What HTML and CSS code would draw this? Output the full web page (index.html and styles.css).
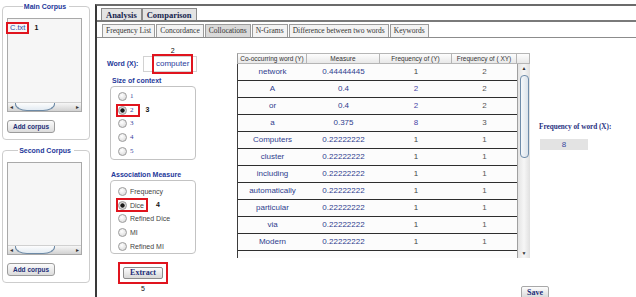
FILE: index.html
```html
<!DOCTYPE html>
<html>
<head>
<meta charset="utf-8">
<link rel="stylesheet" href="styles.css">
</head>
<body>
<div class="app">
  <aside class="side">
    <section class="corpus">
      <div class="legend">Main Corpus</div>
      <div class="list">
        <div class="list-items">
          <div class="list-item"><span class="mark mark-file">C.txt</span><span class="anno num1">1</span></div>
        </div>
        <div class="hscroll"><span class="arr">&#9666;</span><span class="thumb"></span><span class="track"></span><span class="arr">&#9656;</span></div>
      </div>
      <button class="btn btn-add">Add corpus</button>
    </section>
    <section class="corpus corpus-second">
      <div class="legend">Second Corpus</div>
      <div class="list">
        <div class="list-items"></div>
        <div class="hscroll"><span class="arr">&#9666;</span><span class="thumb"></span><span class="track"></span><span class="arr">&#9656;</span></div>
      </div>
      <button class="btn btn-add">Add corpus</button>
    </section>
  </aside>

  <main class="main">
    <nav class="tabs1">
      <span class="tab1 active">Analysis</span><span class="tab1">Comparison</span>
    </nav>
    <nav class="tabs2">
      <span class="tab2">Frequency List</span>
      <span class="tab2">Concordance</span>
      <span class="tab2 active">Collocations</span>
      <span class="tab2">N-Grams</span>
      <span class="tab2">Difference between two words</span>
      <span class="tab2">Keywords</span>
    </nav>

    <div class="content">
      <div class="controls">
        <div class="word-row">
          <span class="lbl word-lbl">Word (X):</span>
          <div class="input"><span class="mark mark-word">computer<span class="anno anno-top">2</span></span></div>
        </div>

        <div class="lbl group-lbl ctx-lbl">Size of context</div>
        <div class="rbox">
          <div class="ropt"><span class="radio"></span><span class="rtxt rnum">1</span></div>
          <div class="ropt"><span class="mark mark-radio mark-r2"><span class="radio on"></span><span class="rtxt rnum">2</span></span><span class="anno anno-3">3</span></div>
          <div class="ropt"><span class="radio"></span><span class="rtxt rnum">3</span></div>
          <div class="ropt"><span class="radio"></span><span class="rtxt rnum">4</span></div>
          <div class="ropt"><span class="radio"></span><span class="rtxt rnum">5</span></div>
        </div>

        <div class="lbl group-lbl assoc-lbl">Association Measure</div>
        <div class="rbox rbox-assoc">
          <div class="ropt"><span class="radio"></span><span class="rtxt">Frequency</span></div>
          <div class="ropt"><span class="mark mark-radio mark-dice"><span class="radio on"></span><span class="rtxt">Dice</span></span><span class="anno anno-4">4</span></div>
          <div class="ropt"><span class="radio"></span><span class="rtxt">Refined Dice</span></div>
          <div class="ropt"><span class="radio"></span><span class="rtxt">MI</span></div>
          <div class="ropt"><span class="radio"></span><span class="rtxt">Refined MI</span></div>
        </div>

        <div class="mark mark-extract"><button class="btn btn-extract">Extract</button></div>
        <div class="anno anno-5">5</div>
      </div>

      <div class="table-col">
        <div class="thead">
          <div class="th">Co-occurring word (Y)</div>
          <div class="th">Measure</div>
          <div class="th">Frequency of (Y)</div>
          <div class="th">Frequency of ( XY)</div>
          <div class="th"></div>
        </div>
        <div class="tbody">
          <div class="rows">
            <div class="tr"><span class="c1">network</span><span class="c2">0.44444445</span><span class="c3">1</span><span class="c4">2</span></div>
            <div class="tr"><span class="c1">A</span><span class="c2">0.4</span><span class="c3 hl">2</span><span class="c4">2</span></div>
            <div class="tr"><span class="c1">or</span><span class="c2">0.4</span><span class="c3 hl">2</span><span class="c4">2</span></div>
            <div class="tr"><span class="c1">a</span><span class="c2">0.375</span><span class="c3 hl">8</span><span class="c4">3</span></div>
            <div class="tr"><span class="c1">Computers</span><span class="c2">0.22222222</span><span class="c3">1</span><span class="c4">1</span></div>
            <div class="tr"><span class="c1">cluster</span><span class="c2">0.22222222</span><span class="c3">1</span><span class="c4">1</span></div>
            <div class="tr"><span class="c1">including</span><span class="c2">0.22222222</span><span class="c3">1</span><span class="c4">1</span></div>
            <div class="tr"><span class="c1">automatically</span><span class="c2">0.22222222</span><span class="c3">1</span><span class="c4">1</span></div>
            <div class="tr"><span class="c1">particular</span><span class="c2">0.22222222</span><span class="c3">1</span><span class="c4">1</span></div>
            <div class="tr"><span class="c1">via</span><span class="c2">0.22222222</span><span class="c3">1</span><span class="c4">1</span></div>
            <div class="tr"><span class="c1">Modern</span><span class="c2">0.22222222</span><span class="c3">1</span><span class="c4">1</span></div>
            <div class="tr"><span class="c1"></span><span class="c2"></span><span class="c3"></span><span class="c4"></span></div>
          </div>
          <div class="vscroll">
            <span class="varr">&#9650;</span>
            <span class="vthumb"></span>
            <span class="vspace"></span>
            <span class="varr">&#9660;</span>
          </div>
        </div>
        <div class="save-row"><button class="btn btn-save">Save</button></div>
      </div>

      <div class="info">
        <div class="info-lbl">Frequency of word (X):</div>
        <div class="info-val">8</div>
      </div>
    </div>
  </main>
</div>
</body>
</html>
```
FILE: styles.css
```css
* { box-sizing: border-box; }

body {
  margin: 0;
  width: 636px;
  height: 297px;
  overflow: hidden;
  background: #fff;
  font-family: "Liberation Sans", Arial, sans-serif;
}

.app { display: flex; height: 297px; }

/* ---------- left side ---------- */
.side { width: 95px; flex: none; }

.corpus {
  margin: 6px 0 0 2px;
  width: 88px;
  height: 134px;
  border: 1px solid #cdcdcd;
  border-radius: 4px;
}
.corpus-second { margin-top: 10px; height: 133px; }

.legend {
  width: fit-content;
  margin: -5px auto 0;
  padding: 0 3px 0 1px;
  background: #fff;
  font: bold 7px/9px "Liberation Sans", Arial, sans-serif;
  color: #24389a;
}

.list {
  margin: 7px 0 0 4px;
  width: 75px;
  height: 94px;
  border: 1px solid #a9a9a9;
  background: #f6f6f6;
  display: flex;
  flex-direction: column;
}
.corpus-second .list { height: 93px; }

.list-items { flex: 1; padding-top: 3px; }
.list-item { display: flex; align-items: center; height: 12px; }

.mark { border: 2px solid #e0141e; }

.mark-file {
  display: inline-flex;
  align-items: center;
  height: 12px;
  margin-left: -2px;
  padding: 0 2px;
  font: 7.5px/8px "Liberation Sans", Arial, sans-serif;
  color: #2b4ba8;
}

.anno {
  font: bold 7px/8px "Liberation Sans", Arial, sans-serif;
  color: #111;
}
.num1 { margin-left: 5px; }

.hscroll {
  height: 9px;
  display: flex;
  background: linear-gradient(#f6f6f6, #d2d2d2);
  border-top: 1px solid #d0d0d0;
}
.arr {
  width: 7px;
  font-size: 6px;
  line-height: 8px;
  text-align: center;
  color: #333;
}
.thumb {
  width: 40px;
  height: 8px;
  border: 1px solid #6d8aa6;
  border-top: 0;
  border-radius: 0 0 12px 12px / 0 0 7px 7px;
  background: linear-gradient(#fdfdfd, #e3ebf2);
}
.track { flex: 1; }

.btn { padding: 0; display: block; cursor: default; }

.btn-add {
  margin: 8px 0 0 4px;
  width: 48px;
  height: 13px;
  border: 1px solid #9c9c9c;
  border-radius: 3px;
  background: linear-gradient(#fbfbfb, #dcdcdc);
  font: bold 6.5px/11px "Liberation Sans", Arial, sans-serif;
  color: #1d2e78;
}

/* ---------- main panel ---------- */
.main {
  flex: 1;
  min-width: 0;
  margin-top: 4px;
  border-top: 2px solid #6b6b6b;
  border-left: 2px solid #393939;
  display: flex;
  flex-direction: column;
}

.tabs1 {
  display: flex;
  padding: 2px 0 0 4px;
  border-bottom: 2px solid #7a7a7a;
}
.tab1 {
  height: 12px;
  padding: 1px 4px 0;
  border: 1px solid #8a8a8a;
  border-bottom: 0;
  background: #e3e3e3;
  font: bold 8.5px/10px "Liberation Serif", "Times New Roman", serif;
  color: #15234d;
}

.tabs2 {
  display: flex;
  gap: 1px;
  padding: 2px 0 0 5px;
  border-bottom: 1px solid #8c8c8c;
}
.tab2 {
  height: 13px;
  padding: 0 3px;
  border: 1px solid #9b9b9b;
  border-bottom: 0;
  background: #f3f3f3;
  font: 7.5px/12px "Liberation Serif", "Times New Roman", serif;
  color: #333;
  white-space: nowrap;
}
.tab2.active { background: #d9d9d9; }

.content {
  flex: 1;
  display: flex;
  padding-left: 9px;
}

/* ---------- controls ---------- */
.controls { width: 92px; flex: none; padding-top: 18px; }

.lbl {
  font: bold 7px/10px "Liberation Sans", Arial, sans-serif;
  color: #24389a;
  white-space: nowrap;
}

.word-row { display: flex; align-items: center; height: 16px; }
.word-lbl { width: 36px; margin-left: 1px; }

.input {
  width: 54px;
  height: 16px;
  border: 1px solid #d2d2d2;
  background: #fff;
  display: flex;
  align-items: center;
}
.mark-word {
  position: relative;
  display: flex;
  align-items: center;
  height: 20px;
  margin-left: 8px;
  padding: 0 2px;
  font: 8px/10px "Liberation Sans", Arial, sans-serif;
  color: #2b3c9c;
}
.anno-top {
  position: absolute;
  top: -9px;
  left: 0;
  right: 0;
  text-align: center;
  font-weight: normal;
}

.ctx-lbl { margin: 4px 0 0 6px; }
.assoc-lbl { margin: 10px 0 0 5px; }

.rbox {
  margin-left: 4px;
  width: 86px;
  height: 74px;
  border: 1px solid #c3c3c3;
  border-radius: 4px;
  padding: 3px 0 0 7px;
}
.rbox-assoc { padding-top: 4px; }

.ropt { display: flex; align-items: center; height: 13.6px; }

.radio {
  flex: none;
  width: 9px;
  height: 9px;
  border-radius: 50%;
  border: 1px solid #9c9c9c;
  background: radial-gradient(circle at 40% 35%, #fff, #d4d4d4);
}
.radio.on {
  background: radial-gradient(circle, #1a1a1a 0 1.8px, #dcdcdc 2.5px, #c8c8c8 100%);
}

.rtxt {
  margin-left: 3px;
  font: 7px/9px "Liberation Sans", Arial, sans-serif;
  color: #444;
}
.rnum {
  font: 7px/9px "Liberation Serif", "Times New Roman", serif;
  color: #33449c;
}

.mark-radio {
  display: flex;
  align-items: center;
  height: 13px;
  margin-left: -2px;
}
.mark-r2 { padding-right: 4px; }
.mark-dice { padding-right: 2px; height: 14px; }
.anno-3 { margin-left: 6px; }
.anno-4 { margin-left: 8px; }

.mark-extract {
  margin: 8px 0 0 12px;
  width: 50px;
  padding: 3px;
}
.btn-extract {
  width: 40px;
  height: 12px;
  border: 1px solid #8c8c8c;
  border-radius: 2px;
  background: linear-gradient(#fdfdfd, #d8d8d8);
  font: bold 8px/10px "Liberation Serif", "Times New Roman", serif;
  color: #1d2e78;
}
.anno-5 {
  width: 50px;
  margin: 1px 0 0 12px;
  text-align: center;
  font-weight: normal;
}

/* ---------- table ---------- */
.table-col { margin: 15px 0 0 39px; width: 293px; flex: none; }

.thead {
  display: grid;
  grid-template-columns: 70px 73px 72px 65px 13px;
  height: 11px;
}
.th {
  border: 1px solid #b5b5b5;
  border-left: 0;
  background: linear-gradient(#fdfdfd, #e8e8e8);
  font: 6.5px/9px "Liberation Sans", Arial, sans-serif;
  color: #333;
  text-align: center;
  white-space: nowrap;
  overflow: hidden;
}
.th:first-child { border-left: 1px solid #9a9a9a; }

.tbody {
  display: flex;
  height: 194px;
  border-left: 1px solid #3c3c3c;
}
.rows { width: 279px; overflow: hidden; }

.tr {
  display: grid;
  grid-template-columns: 69px 73px 72px 65px;
  height: 17px;
  border-bottom: 1px solid #2e2e2e;
  background: #fcfcfc;
  font: 8px/16px "Liberation Sans", Arial, sans-serif;
  text-align: center;
}
.c1, .c2 { color: #2f3d8e; }
.c3 { color: #444; }
.c3.hl { color: #4a46a6; }
.c4 { color: #555; }

.vscroll {
  width: 13px;
  border-left: 1px solid #a0a0a0;
  background: linear-gradient(90deg, #e4e4e4, #f6f6f6 50%, #e0e0e0);
  display: flex;
  flex-direction: column;
  align-items: center;
}
.varr {
  height: 9px;
  font-size: 5px;
  line-height: 9px;
  color: #333;
}
.vthumb {
  width: 9px;
  height: 83px;
  margin-top: 2px;
  border: 1px solid #6f8caa;
  border-radius: 4px;
  background: linear-gradient(90deg, #f6f8fa, #dbe3eb);
}
.vspace { flex: 1; }

.save-row {
  display: flex;
  justify-content: flex-end;
  margin: 28px -19px 0 0;
}
.btn-save {
  width: 28px;
  height: 13px;
  border: 1px solid #a8a8a8;
  border-radius: 2px;
  background: linear-gradient(#fdfdfd, #d8d8d8);
  font: bold 8px/11px "Liberation Serif", "Times New Roman", serif;
  color: #1d2e78;
}

/* ---------- info ---------- */
.info { margin-left: 9px; padding-top: 84px; }
.info-lbl {
  font: bold 7.2px/10px "Liberation Serif", "Times New Roman", serif;
  color: #1f2f80;
  white-space: nowrap;
}
.info-val {
  margin: 7px 0 0 1px;
  width: 48px;
  height: 11px;
  background: #e3e3e3;
  text-align: center;
  font: 8px/11px "Liberation Sans", Arial, sans-serif;
  color: #3a4aa0;
}
```
